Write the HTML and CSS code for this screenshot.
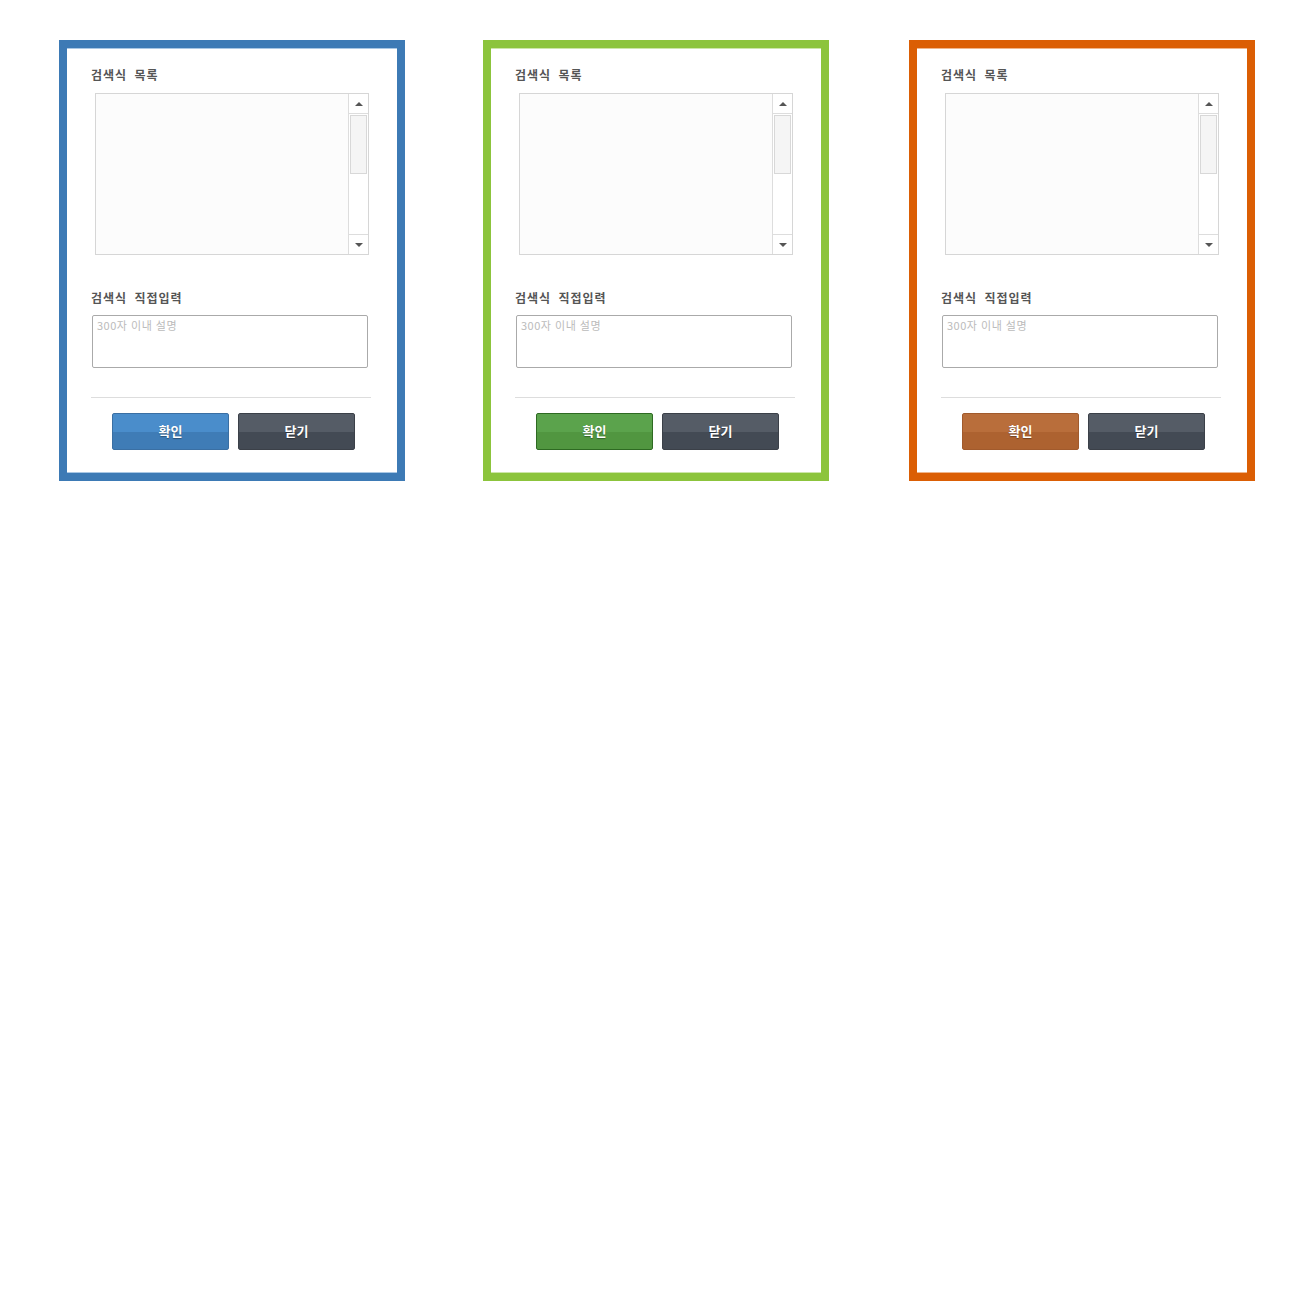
FILE: index.html
```html
<!DOCTYPE html>
<html lang="ko">
<head>
<meta charset="utf-8">
<title>검색식</title>
<link rel="stylesheet" href="styles.css">
</head>
<body>
<div class="row">
  <div class="panel panel-blue">
    <div class="label">검색식 목록</div>
    <div class="listbox">
      <div class="list-area"></div>
      <div class="scrollbar">
        <div class="sb-btn sb-up"><span class="arrow-up"></span></div>
        <div class="sb-track"><div class="sb-thumb"></div></div>
        <div class="sb-btn sb-down"><span class="arrow-down"></span></div>
      </div>
    </div>
    <div class="label label-2">검색식 직접입력</div>
    <textarea class="input" placeholder="300자 이내 설명"></textarea>
    <div class="divider"></div>
    <div class="buttons">
      <button class="btn btn-ok">확인</button>
      <button class="btn btn-close">닫기</button>
    </div>
  </div>

  <div class="panel panel-green">
    <div class="label">검색식 목록</div>
    <div class="listbox">
      <div class="list-area"></div>
      <div class="scrollbar">
        <div class="sb-btn sb-up"><span class="arrow-up"></span></div>
        <div class="sb-track"><div class="sb-thumb"></div></div>
        <div class="sb-btn sb-down"><span class="arrow-down"></span></div>
      </div>
    </div>
    <div class="label label-2">검색식 직접입력</div>
    <textarea class="input" placeholder="300자 이내 설명"></textarea>
    <div class="divider"></div>
    <div class="buttons">
      <button class="btn btn-ok">확인</button>
      <button class="btn btn-close">닫기</button>
    </div>
  </div>

  <div class="panel panel-orange">
    <div class="label">검색식 목록</div>
    <div class="listbox">
      <div class="list-area"></div>
      <div class="scrollbar">
        <div class="sb-btn sb-up"><span class="arrow-up"></span></div>
        <div class="sb-track"><div class="sb-thumb"></div></div>
        <div class="sb-btn sb-down"><span class="arrow-down"></span></div>
      </div>
    </div>
    <div class="label label-2">검색식 직접입력</div>
    <textarea class="input" placeholder="300자 이내 설명"></textarea>
    <div class="divider"></div>
    <div class="buttons">
      <button class="btn btn-ok">확인</button>
      <button class="btn btn-close">닫기</button>
    </div>
  </div>
</div>
</body>
</html>
```

FILE: styles.css
```css
html, body {
  margin: 0;
  padding: 0;
  background: #ffffff;
}

body {
  font-family: "Noto Sans CJK KR", "Noto Sans", "Liberation Sans", sans-serif;
}

.row {
  display: flex;
  align-items: flex-start;
  padding: 40px 0 0 59px;
  gap: 78px;
}

.row .panel:last-child {
  margin-left: 2px;
}

.panel {
  box-sizing: border-box;
  width: 346px;
  height: 441px;
  border: 8px solid #3d7ab5;
  background: #ffffff;
  padding: 20px 0 0 24px;
  display: flex;
  flex-direction: column;
  align-items: flex-start;
}

.panel-blue {
  border-color: #3d7ab5;
  box-shadow: inset 0 1px 0 #a9c7e4, inset 0 -1px 0 #a9c7e4;
}

.panel-green {
  border-color: #8cc43c;
  box-shadow: inset 0 1px 0 #cde6a8, inset 0 -1px 0 #cde6a8;
}

.panel-orange {
  border-color: #db5e04;
  box-shadow: inset 0 1px 0 #f0b58a, inset 0 -1px 0 #f0b58a;
}

.label {
  font-size: 12px;
  line-height: 14px;
  font-weight: bold;
  color: #555555;
  letter-spacing: 1px;
  word-spacing: 3px;
}

.label-2 {
  margin-top: 36px;
}

.listbox {
  box-sizing: border-box;
  margin: 11px 0 0 4px;
  width: 274px;
  height: 162px;
  border: 1px solid #d6d6d6;
  background: #fcfcfc;
  display: flex;
}

.list-area {
  flex: 1;
}

.scrollbar {
  width: 19px;
  border-left: 1px solid #dddddd;
  background: #ffffff;
  display: flex;
  flex-direction: column;
}

.sb-btn {
  height: 19px;
  display: flex;
  align-items: center;
  justify-content: center;
  background: #ffffff;
}

.sb-up {
  border-bottom: 1px solid #dddddd;
}

.sb-down {
  border-top: 1px solid #dddddd;
}

.arrow-up {
  width: 0;
  height: 0;
  border-left: 4px solid transparent;
  border-right: 4px solid transparent;
  border-bottom: 4px solid #555555;
}

.arrow-down {
  width: 0;
  height: 0;
  border-left: 4px solid transparent;
  border-right: 4px solid transparent;
  border-top: 4px solid #555555;
}

.sb-track {
  flex: 1;
  padding: 1px 1px 0 1px;
}

.sb-thumb {
  box-sizing: border-box;
  height: 59px;
  border: 1px solid #d8d8d8;
  background: #f5f5f5;
}

.input {
  box-sizing: border-box;
  display: block;
  margin: 10px 0 0 1px;
  width: 276px;
  height: 53px;
  border: 1px solid #aaaaaa;
  border-radius: 2px;
  padding: 2px 4px;
  resize: none;
  background: #ffffff;
  font-family: "Noto Sans CJK KR", "Noto Sans", sans-serif;
  font-size: 11px;
  line-height: 14px;
  letter-spacing: 0.5px;
  color: #333333;
  outline: none;
}

.input::placeholder {
  color: #bbbbbb;
}

.divider {
  margin-top: 29px;
  width: 280px;
  height: 1px;
  background: #dddddd;
}

.buttons {
  display: flex;
  gap: 9px;
  margin: 15px 0 0 21px;
}

.btn {
  box-sizing: border-box;
  width: 117px;
  height: 37px;
  border-radius: 2px;
  border: 1px solid #3a6fa3;
  font-family: "Noto Sans CJK KR", "Noto Sans", sans-serif;
  font-size: 13px;
  font-weight: bold;
  color: #ffffff;
  text-shadow: 0 1px 1px rgba(0, 0, 0, 0.35);
  padding: 0 0 2px 0;
  cursor: pointer;
}

.panel-blue .btn-ok {
  border-color: #3a6fa3;
  background: linear-gradient(to bottom, #4a8dcb 0%, #4a8dcb 50%, #3f7cb6 50%, #3f7cb6 100%);
}

.panel-green .btn-ok {
  border-color: #2e6a22;
  background: linear-gradient(to bottom, #5ba34c 0%, #5ba34c 50%, #519640 50%, #519640 100%);
}

.panel-orange .btn-ok {
  border-color: #a15a2c;
  background: linear-gradient(to bottom, #b96e3b 0%, #b96e3b 50%, #ad6230 50%, #ad6230 100%);
}

.btn-close {
  border-color: #3b4048;
  background: linear-gradient(to bottom, #555c66 0%, #555c66 50%, #434a54 50%, #434a54 100%);
}
```
